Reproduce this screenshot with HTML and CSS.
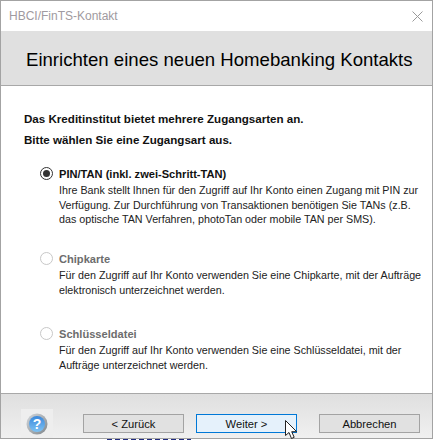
FILE: index.html
```html
<!DOCTYPE html>
<html>
<head>
	<meta charset="UTF-8">
	<title>HBCI/FinTS-Kontakt</title>
	<link rel="stylesheet" href="styles.css">
</head>
<body>
	<div class="window">
		<div class="titlebar">
			<span class="title">HBCI/FinTS-Kontakt</span>
			<svg class="close" width="11" height="11" viewBox="0 0 11 11"><path d="M.5.5l10 10M10.500.5l-10 10" stroke="#9a9a9a" fill="none"/></svg>
		</div>
		<div class="header">
			<h1>Einrichten eines neuen Homebanking Kontakts</h1>
		</div>
		<div class="content">
			<p class="intro">Das Kreditinstitut bietet mehrere Zugangsarten an.</p>
			<p class="intro">Bitte wählen Sie eine Zugangsart aus.</p>

			<div class="option option-first">
				<span class="radio checked"></span>
				<div>
					<div class="option-name">PIN/TAN (inkl. zwei-Schritt-TAN)</div>
					<div class="option-text">Ihre Bank stellt Ihnen für den Zugriff auf Ihr Konto einen Zugang mit PIN zur<br>Verfügung. Zur Durchführung von Transaktionen benötigen Sie TANs (z.B.<br>das optische TAN Verfahren, photoTan oder mobile TAN per SMS).</div>
				</div>
			</div>
			<div class="option disabled">
				<span class="radio"></span>
				<div>
					<div class="option-name">Chipkarte</div>
					<div class="option-text">Für den Zugriff auf Ihr Konto verwenden Sie eine Chipkarte, mit der Aufträge<br>elektronisch unterzeichnet werden.</div>
				</div>
			</div>
			<div class="option disabled">
				<span class="radio"></span>
				<div>
					<div class="option-name">Schlüsseldatei</div>
					<div class="option-text">Für den Zugriff auf Ihr Konto verwenden Sie eine Schlüsseldatei, mit der<br>Aufträge unterzeichnet werden.</div>
				</div>
			</div>
		</div>
		<div class="footer">
			<div class="help">
				<svg width="22" height="22" viewBox="0 0 22 22">
					<defs>
						<linearGradient id="ball" x1="0" y1="0" x2="0" y2="1">
							<stop offset="0" stop-color="#3a88dc"/>
							<stop offset="1" stop-color="#7fc2f2"/>
						</linearGradient>
						<linearGradient id="ring" x1="0" y1="0" x2="1" y2="1">
							<stop offset="0" stop-color="#d4d8dc"/>
							<stop offset="1" stop-color="#7f858a"/>
						</linearGradient>
					</defs>
					<circle cx="11" cy="11" r="10.500" fill="url(#ring)"/>
					<circle cx="11" cy="11" r="8" fill="url(#ball)"/>
					<text x="11" y="16" class="help-mark">?</text>
				</svg>
			</div>
			<button class="btn btn-back">&lt; Zurück</button>
			<button class="btn btn-default">Weiter &gt;</button>
			<button class="btn btn-cancel">Abbrechen</button>
		</div>
	</div>
	<div class="behind"></div>
	<svg class="cursor" width="14" height="21" viewBox="0 0 14 21"><path d="M1.500 1.500v15l3.500-3 2.500 6 2.700-1.200-2.500-5.600h5z" fill="#fff" stroke="#222" stroke-linejoin="round"/></svg>
</body>
</html>
```

FILE: styles.css
```css
html, body {
	margin: 0;
	height: 440px;
	overflow: hidden;
}
body {
	background-color: #fff;
	font-family: "Liberation Sans", Arial, sans-serif;
	color: #222;
}
.window {
	width: 431px;
	height: 437px;
	border: 1px solid #a3a3a3;
	background-color: #fff;
	display: flex;
	flex-direction: column;
}
.titlebar {
	flex: none;
	height: 30px;
	display: flex;
	align-items: center;
	justify-content: space-between;
	padding: 0 9px 0 8px;
	font-size: 12px;
	color: #a09aa0;
}
.header {
	flex: none;
	height: 54px;
	background-color: #e0e0e0;
	border-bottom: 1px solid #a8a8a8;
	display: flex;
	align-items: center;
	padding-left: 25px;
}
h1 {
	margin: 3px 0 0;
	font-size: 18.6px;
	font-weight: normal;
	color: #000;
}
.content {
	flex: 1;
	min-height: 0;
	padding: 26px 0 0 23px;
}
.intro {
	margin: 0 0 7px;
	font-size: 11.6px;
	line-height: 14px;
	font-weight: bold;
	color: #111;
}
.option {
	display: flex;
	gap: 6px;
	margin-left: 16px;
	height: 75px;
	font-size: 10.73px;
	line-height: 14.5px;
	white-space: nowrap;
}
.option-first {
	margin-top: 20px;
	margin-bottom: 10px;
}
.option:last-child {
	height: auto;
}
.radio {
	width: 11px;
	height: 11px;
	border: 1px solid #c8c8c8;
	border-radius: 50%;
	flex: none;
	position: relative;
}
.radio.checked {
	border-color: #333;
}
.radio.checked::after {
	content: "";
	position: absolute;
	top: 2px;
	left: 2px;
	width: 7px;
	height: 7px;
	border-radius: 50%;
	background-color: #333;
}
.option-name {
	font-weight: bold;
	font-size: 11.1px;
	line-height: 14px;
	margin-bottom: 2px;
	color: #111;
}
.option.disabled .option-name {
	color: #6d6d6d;
}
.footer {
	flex: none;
	height: 44px;
	border-top: 1px solid #a8a8a8;
	background: linear-gradient(#dfdfdf, #f0f0f0);
	display: flex;
	align-items: flex-start;
	padding-left: 20px;
}
.help {
	width: 32px;
	height: 29px;
	background-color: #eeeeee;
	margin-top: 15px;
	padding-top: 1px;
	box-sizing: border-box;
	display: flex;
	align-items: center;
	justify-content: center;
}
.help-mark {
	font-size: 14px;
	font-weight: bold;
	fill: #fff;
	text-anchor: middle;
}
.btn {
	width: 101px;
	height: 19px;
	margin: 20px 0 0 12px;
	padding: 0;
	border: 1px solid #a3a3a3;
	background-color: #e1e1e1;
	font-family: inherit;
	font-size: 11.2px;
	color: #111;
}
.btn-back {
	margin-left: 30px;
}
.btn-default {
	border-color: #0078d7;
	background-color: #e5f1fb;
}
.btn-cancel {
	margin-left: 22px;
}
.behind {
	width: 84px;
	height: 1px;
	margin-left: 107px;
	background: repeating-linear-gradient(90deg, #1f2a80 0 5px, transparent 5px 8px);
}
.cursor {
	position: absolute;
	left: 284px;
	top: 419px;
}
```
